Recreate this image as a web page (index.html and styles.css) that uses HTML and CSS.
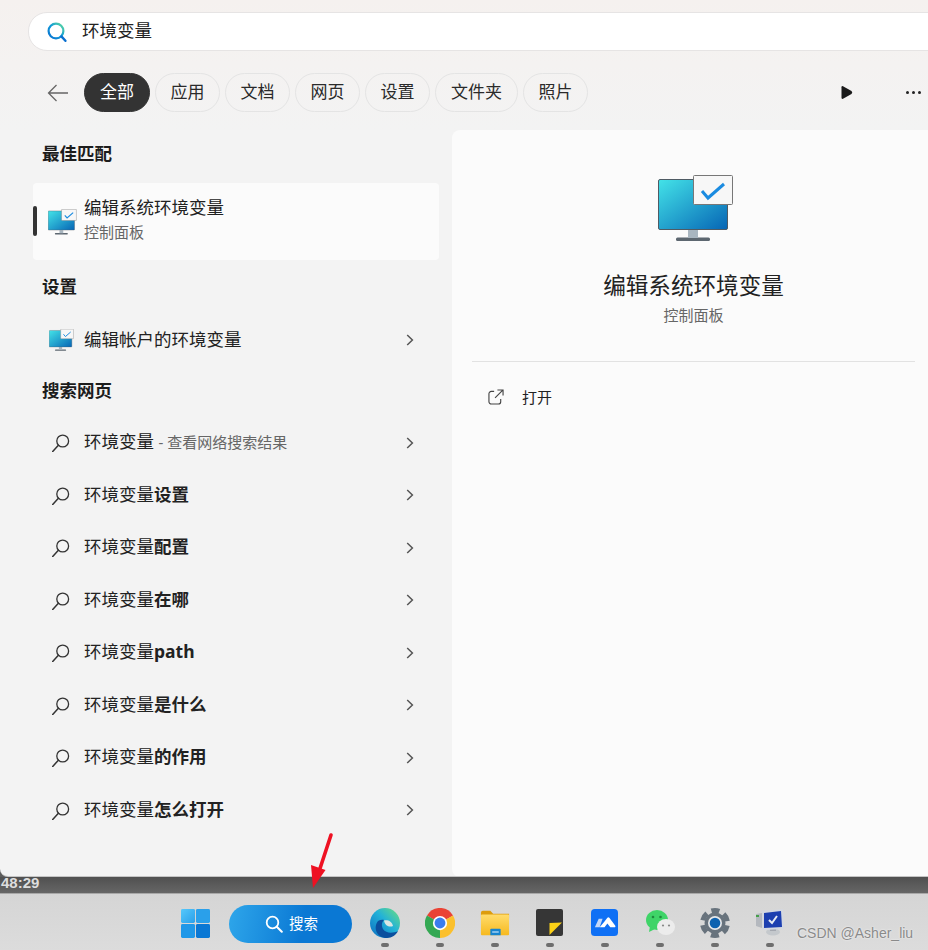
FILE: index.html
```html
<!DOCTYPE html>
<html lang="zh-CN">
<head>
  <meta charset="UTF-8">
  <title>搜索</title>
  <link rel="stylesheet" href="styles.css">
</head>
<body>

<svg class="defs" width="0" height="0">
  <defs>
    <linearGradient id="screenGrad" x1="0" y1="0" x2="1" y2="1">
      <stop offset="0" stop-color="#43e3e8"/>
      <stop offset="1" stop-color="#0665b5"/>
    </linearGradient>
    <linearGradient id="glassGrad" x1="1" y1="0" x2="0" y2="1">
      <stop offset="0" stop-color="#5fdc9c"/>
      <stop offset="0.5" stop-color="#0f9ad8"/>
      <stop offset="1" stop-color="#0a6fd0"/>
    </linearGradient>
    <linearGradient id="startGrad" x1="0" y1="0" x2="1" y2="1">
      <stop offset="0" stop-color="#56c8fb"/>
      <stop offset="1" stop-color="#2aa0ea"/>
    </linearGradient>
    <linearGradient id="edgeGrad" x1="1" y1="0" x2="0" y2="1">
      <stop offset="0" stop-color="#6fe07c"/>
      <stop offset="0.45" stop-color="#22b2d8"/>
      <stop offset="1" stop-color="#0c6cc0"/>
    </linearGradient>
    <linearGradient id="folderGrad" x1="0" y1="0" x2="0" y2="1">
      <stop offset="0" stop-color="#ffdc6c"/>
      <stop offset="1" stop-color="#f6b91f"/>
    </linearGradient>
    <symbol id="monitor" viewBox="0 0 76 67">
      <rect x="18" y="62.5" width="34" height="3.5" rx="1.5" fill="#5d6770"/>
      <rect x="30" y="55" width="10" height="8" fill="#a9b6c0"/>
      <rect x="0.5" y="4.5" width="69" height="50" rx="1.5" fill="url(#screenGrad)" stroke="#4f5b64"/>
      <rect x="35.5" y="0.5" width="39" height="29" rx="1" fill="#f7f7f7" stroke="#777"/>
      <path d="M44 16l6 7 16-14" fill="none" stroke="#1a8be0" stroke-width="3"/>
    </symbol>
    <symbol id="glass" viewBox="0 0 18 18">
      <circle cx="10.7" cy="7" r="5.9" fill="none" stroke="#333" stroke-width="1.3"/>
      <path d="M6.4 11.2L.7 17.4" fill="none" stroke="#333" stroke-width="1.5" stroke-linecap="round"/>
    </symbol>
    <symbol id="chevron" viewBox="0 0 8 12">
      <path d="M1.2 1l5.2 5-5.2 5" fill="none" stroke="#555" stroke-width="1.5"/>
    </symbol>
  </defs>
</svg>

<div class="flyout">
  <div class="search-box">
    <svg class="search-icon" viewBox="0 0 20 20">
      <circle cx="9" cy="9" r="7.4" fill="none" stroke="url(#glassGrad)" stroke-width="2.2"/>
      <path d="M14.4 14.4l4 4.4" stroke="#0a6fd0" stroke-width="2.4" stroke-linecap="round"/>
    </svg>
    <span class="search-text">环境变量</span>
  </div>

  <div class="filters">
    <svg class="back" viewBox="0 0 22 18">
      <path d="M21 9H1.5M9.5 1L1.5 9l8 8" fill="none" stroke="#666" stroke-width="1.3"/>
    </svg>
    <span class="chip active">全部</span>
    <span class="chip">应用</span>
    <span class="chip">文档</span>
    <span class="chip">网页</span>
    <span class="chip">设置</span>
    <span class="chip wide">文件夹</span>
    <span class="chip">照片</span>
    <svg class="play" viewBox="0 0 12 15">
      <path d="M2 1.2L10.5 6q1.500 1.500 0 3L2 13.800Q.5 14.300.5 12.800V2.200Q.5.700 2 1.200z" fill="#1a1a1a"/>
    </svg>
    <div class="dots"><i></i><i></i><i></i></div>
  </div>

  <div class="content">
    <div class="results">
      <h3 class="heading first">最佳匹配</h3>
      <div class="best">
        <span class="marker"></span>
        <svg class="app-icon"><use href="#monitor"/></svg>
        <div class="best-text">
          <div class="best-title">编辑系统环境变量</div>
          <div class="best-sub">控制面板</div>
        </div>
      </div>

      <h3 class="heading second">设置</h3>
      <div class="row">
        <svg class="app-icon small"><use href="#monitor"/></svg>
        <span class="label">编辑帐户的环境变量</span>
        <svg class="chev"><use href="#chevron"/></svg>
      </div>

      <h3 class="heading third">搜索网页</h3>
      <div class="row">
        <svg class="glass"><use href="#glass"/></svg>
        <span class="label">环境变量 <small>- 查看网络搜索结果</small></span>
        <svg class="chev"><use href="#chevron"/></svg>
      </div>
      <div class="row">
        <svg class="glass"><use href="#glass"/></svg>
        <span class="label">环境变量<b>设置</b></span>
        <svg class="chev"><use href="#chevron"/></svg>
      </div>
      <div class="row">
        <svg class="glass"><use href="#glass"/></svg>
        <span class="label">环境变量<b>配置</b></span>
        <svg class="chev"><use href="#chevron"/></svg>
      </div>
      <div class="row">
        <svg class="glass"><use href="#glass"/></svg>
        <span class="label">环境变量<b>在哪</b></span>
        <svg class="chev"><use href="#chevron"/></svg>
      </div>
      <div class="row">
        <svg class="glass"><use href="#glass"/></svg>
        <span class="label">环境变量<b>path</b></span>
        <svg class="chev"><use href="#chevron"/></svg>
      </div>
      <div class="row">
        <svg class="glass"><use href="#glass"/></svg>
        <span class="label">环境变量<b>是什么</b></span>
        <svg class="chev"><use href="#chevron"/></svg>
      </div>
      <div class="row">
        <svg class="glass"><use href="#glass"/></svg>
        <span class="label">环境变量<b>的作用</b></span>
        <svg class="chev"><use href="#chevron"/></svg>
      </div>
      <div class="row">
        <svg class="glass"><use href="#glass"/></svg>
        <span class="label">环境变量<b>怎么打开</b></span>
        <svg class="chev"><use href="#chevron"/></svg>
      </div>
    </div>

    <div class="detail">
      <svg class="detail-icon"><use href="#monitor"/></svg>
      <div class="detail-title">编辑系统环境变量</div>
      <div class="detail-sub">控制面板</div>
      <div class="divider"></div>
      <div class="action">
        <svg class="open-icon" viewBox="0 0 17 17">
          <path d="M6.5 2.500H3.5A2.500 2.500 0 0 0 1 5v8.500A2.500 2.500 0 0 0 3.500 16H11a2.500 2.500 0 0 0 2.500-2.500v-3" fill="none" stroke="#444" stroke-width="1.2"/>
          <path d="M10 1h6v6M16 1L7.500 9.500" fill="none" stroke="#444" stroke-width="1.2"/>
        </svg>
        <span>打开</span>
      </div>
    </div>
  </div>
</div>

<div class="band"><span>48:29</span></div>

<div class="taskbar">
  <svg class="start" viewBox="0 0 30 30">
    <rect x="0" y="0" width="14.5" height="14.5" rx="1.5" fill="url(#startGrad)"/>
    <rect x="15.5" y="0" width="14.5" height="14.5" rx="1.5" fill="#2aa0ea"/>
    <rect x="0" y="15.5" width="14.5" height="14.5" rx="1.5" fill="#1f98e8"/>
    <rect x="15.5" y="15.5" width="14.5" height="14.5" rx="1.5" fill="#0a78d4"/>
  </svg>

  <div class="search-pill">
    <svg viewBox="0 0 18 18">
      <circle cx="7.5" cy="7.5" r="5.8" fill="none" stroke="#fff" stroke-width="1.8"/>
      <path d="M11.8 11.800l5 5" stroke="#fff" stroke-width="2" stroke-linecap="round"/>
    </svg>
    <span>搜索</span>
  </div>

  <div class="dock">
    <div class="dock-item">
      <svg viewBox="0 0 30 30">
        <circle cx="15" cy="15" r="15" fill="url(#edgeGrad)"/>
        <path d="M14 12.500C18 11.500 22 13.500 23 18c-3 1.500-8 .5-9-5.500z" fill="#d9e6e4"/>
        <path d="M8 13C3 19 6 30 17 30c5 0 9-3 11-7-4 2-12 3-15-2-2-4-1-7 1-9-2-.5-4 0-6 1z" fill="#0b4f9e"/>
      </svg>
      <i></i>
    </div>
    <div class="dock-item">
      <svg viewBox="0 0 32 32">
        <path d="M16 16L2.100 8A16 16 0 0 1 29.900 8z" fill="#ea4335"/>
        <path d="M16 16L29.900 8A16 16 0 0 1 16 32z" fill="#fbc02d"/>
        <path d="M16 16L16 32A16 16 0 0 1 2.100 8z" fill="#34a853"/>
        <circle cx="16" cy="16" r="7.6" fill="#fff"/>
        <circle cx="16" cy="16" r="5.8" fill="#3b7dee"/>
      </svg>
      <i></i>
    </div>
    <div class="dock-item">
      <svg viewBox="0 0 32 28">
        <path d="M1 3q0-2 2-2h8l3 3h17v5H1z" fill="#dd9c0c"/>
        <rect x="1" y="5" width="30" height="22" rx="1" fill="url(#folderGrad)"/>
        <path d="M11 27v-6q0-1 1-1h9q1 0 1 1v6z" fill="#1784cf"/>
        <rect x="13" y="23" width="7" height="1.2" fill="#cfeaff"/>
      </svg>
      <i></i>
    </div>
    <div class="dock-item">
      <svg class="tile" viewBox="0 0 27 27">
        <rect x="0" y="0" width="27" height="27" rx="2" fill="#363636"/>
        <path d="M13.500 14L26 13.500 13.500 26z" fill="#fcd116"/>
      </svg>
      <i></i>
    </div>
    <div class="dock-item">
      <svg class="tile" viewBox="0 0 28 28">
        <rect x="0" y="0" width="28" height="28" rx="4" fill="#0f70f5"/>
        <path d="M4 19l4-9h4l-3 9z" fill="#c4d8f8"/>
        <path d="M9 19l5-6 3-4q1-1 2 0l6 8q1 2-1 2h-4l-3-4-3 4z" fill="#fff"/>
      </svg>
      <i></i>
    </div>
    <div class="dock-item">
      <svg viewBox="0 0 30 28">
        <ellipse cx="12" cy="11" rx="11" ry="10" fill="#3fd468"/>
        <path d="M5 17l-1 6 6-3z" fill="#3fd468"/>
        <circle cx="8" cy="8" r="1.3" fill="#1f8a3e"/>
        <circle cx="15.5" cy="8" r="1.3" fill="#1f8a3e"/>
        <ellipse cx="21" cy="18" rx="9" ry="8" fill="#ececec"/>
        <circle cx="18" cy="16.5" r="1.1" fill="#888"/>
        <circle cx="24" cy="16.5" r="1.1" fill="#888"/>
      </svg>
      <i></i>
    </div>
    <div class="dock-item">
      <svg viewBox="0 0 30 30">
        <circle cx="15" cy="15" r="12.5" fill="none" stroke="#68737d" stroke-width="5" stroke-dasharray="8 5.09" stroke-dashoffset="-2.55"/>
        <circle cx="15" cy="15" r="10.5" fill="#68737d"/>
        <circle cx="15" cy="15" r="7" fill="#e6e8ea"/>
        <circle cx="15" cy="15" r="5.3" fill="#0d62b0"/>
      </svg>
      <i></i>
    </div>
    <div class="dock-item">
      <svg viewBox="0 0 30 30">
        <ellipse cx="18" cy="24" rx="7" ry="3.5" fill="#c4c8cc"/>
        <rect x="15" y="20" width="6" height="3" fill="#a4a8b0"/>
        <path d="M1 6l6-1v15l-6-2z" fill="#b4b8be"/>
        <rect x="1" y="7" width="3" height="2" fill="#46a04a"/>
        <path d="M7 3l21-2 1 20-22 1z" fill="#d4d8e0"/>
        <path d="M9 5l17-2 1 16-18 1z" fill="#1c3fb0"/>
        <path d="M14 12l3 3 5-7" fill="none" stroke="#e8ecf4" stroke-width="2"/>
      </svg>
      <i></i>
    </div>
  </div>
</div>

<!-- screenshot annotation and watermark, both lie over the page -->
<svg class="arrow" viewBox="0 0 24 58">
  <path d="M21 3L9.5 38" stroke="#ee1122" stroke-width="3.6" stroke-linecap="round"/>
  <path d="M1 33l14.5 5L3 56z" fill="#ee1122"/>
</svg>
<span class="watermark">CSDN @Asher_liu</span>

</body>
</html>
```

FILE: styles.css
```css
* {
  box-sizing: border-box;
}

html, body {
  margin: 0;
  height: 950px;
  overflow: hidden;
}

body {
  position: relative;
  font-family: "Noto Sans", "Noto Sans CJK SC", sans-serif;
  color: #222;
  background-color: #5c5c5c;
}

.defs {
  position: absolute;
}

.flyout {
  height: 877px;
  overflow: hidden;
  background: linear-gradient(#f5f1ef, #f3f3f3 130px);
  border-bottom: 1px solid #c4c4c4;
  border-bottom-left-radius: 8px;
}

.search-box {
  display: flex;
  align-items: center;
  width: 940px;
  height: 39px;
  margin: 12px 0 0 28px;
  padding-left: 18px;
  background-color: #fff;
  border: 1px solid #e6e4e4;
  border-radius: 19px;
  font-size: 17.5px;
}

.search-icon {
  width: 20px;
  height: 20px;
  margin-right: 15px;
}

.search-text {
  padding-bottom: 4px;
}

.filters {
  display: flex;
  align-items: center;
  gap: 5px;
  height: 39px;
  margin-top: 22px;
  padding-left: 47px;
}

.back {
  width: 22px;
  height: 18px;
  margin-right: 10px;
}

.chip {
  display: flex;
  align-items: center;
  justify-content: center;
  height: 39px;
  padding: 0 14.5px 4px;
  border: 1px solid #e4e4e4;
  border-radius: 20px;
  font-size: 17px;
  color: #2a2a2a;
}

.chip.active {
  padding: 0 15px 4px;
  background-color: #333;
  border-color: #333;
  color: #fff;
}

.chip.wide {
  padding: 0 15px 4px;
}

.play {
  width: 12px;
  height: 15px;
  margin-left: auto;
}

.dots {
  display: flex;
  gap: 3px;
  margin: 0 7px 0 48px;
}

.dots i {
  width: 3px;
  height: 3px;
  border-radius: 50%;
  background-color: #222;
}

.content {
  display: grid;
  grid-template-columns: 452px 1fr;
  margin-top: 18px;
}

.results {
  padding-left: 33px;
}

.heading {
  display: flex;
  align-items: center;
  margin: 0;
  padding: 0 0 4px 9px;
  font-size: 17.5px;
  font-weight: 700;
  color: #1c1c1c;
}

.heading.first {
  height: 48px;
  margin-bottom: 5px;
}

.heading.second {
  height: 54px;
}

.heading.third {
  height: 50px;
}

.best {
  position: relative;
  display: flex;
  align-items: center;
  width: 406px;
  height: 77px;
  padding-left: 15px;
  background-color: #fbfbfb;
  border-radius: 4px;
}

.marker {
  position: absolute;
  left: 0;
  top: 23px;
  width: 4px;
  height: 30px;
  border-radius: 2px;
  background-color: #333;
}

.app-icon {
  flex: none;
  width: 29px;
  height: 26px;
  margin-right: 7px;
}

.app-icon.small {
  width: 25px;
  height: 22px;
  margin: 0 10px 0 1px;
}

.best-text {
  margin-bottom: 5px;
}

.best-title {
  font-size: 17.5px;
  line-height: 26px;
}

.best-sub {
  font-size: 15px;
  line-height: 24px;
  color: #666;
}

.row {
  display: flex;
  align-items: center;
  width: 406px;
  height: 52.5px;
  padding: 0 25px 0 15px;
}

.glass {
  flex: none;
  width: 18px;
  height: 18px;
  margin: 1px 14px 0 4px;
}

.label {
  flex: 1;
  margin-bottom: 4px;
  font-size: 17.5px;
}

.label b {
  font-weight: 700;
}

.label small {
  font-size: 15px;
  color: #666;
}

.chev {
  flex: none;
  width: 8px;
  height: 12px;
}

.detail {
  display: flex;
  flex-direction: column;
  align-items: center;
  height: 747px;
  padding: 45px 0 0 7px;
  background-color: #fbfbfb;
  border-radius: 8px 0 0 8px;
}

.detail-icon {
  width: 76px;
  height: 67px;
  margin-left: 5px;
}

.detail-title {
  margin-top: 29px;
  font-size: 22.6px;
  line-height: 30px;
}

.detail-sub {
  margin-top: 4px;
  font-size: 15px;
  line-height: 20px;
  color: #666;
}

.divider {
  align-self: stretch;
  height: 1px;
  margin: 36px 13px 0 13px;
  background-color: #e2e2e2;
}

.action {
  display: flex;
  align-items: center;
  align-self: stretch;
  gap: 18px;
  margin-top: 24px;
  padding-left: 29px;
  font-size: 15px;
  line-height: 22px;
}

.open-icon {
  width: 16px;
  height: 16px;
}

.band {
  height: 16px;
  padding-left: 1px;
  background: linear-gradient(#505050, #666);
  font-family: "Liberation Sans", sans-serif;
  font-size: 15px;
  font-weight: 700;
  line-height: 11px;
  color: #ddd;
}

.taskbar {
  display: flex;
  align-items: flex-start;
  height: 57px;
  padding: 11px 0 0 181px;
  background: linear-gradient(#d5d5d5, #dcdcdc);
  border-top: 1px solid #a8a8a8;
}

.start {
  width: 29px;
  height: 29px;
  margin: 4px 19px 0 0;
}

.search-pill {
  display: flex;
  align-items: center;
  justify-content: center;
  gap: 6px;
  width: 123px;
  height: 38px;
  padding: 0 0 0 2px;
  background: linear-gradient(100deg, #2ea6ea, #0a78d4 60%);
  border-radius: 19px;
  font-size: 14.5px;
  color: #fff;
}

.search-pill span {
  padding-bottom: 3px;
}

.search-pill svg {
  width: 18px;
  height: 18px;
}

.dock {
  display: flex;
  margin-left: 5px;
}

.dock-item {
  display: flex;
  flex-direction: column;
  align-items: center;
  justify-content: flex-end;
  width: 55px;
  height: 42px;
}

.dock-item svg {
  width: 30px;
  height: 30px;
  margin-bottom: 5px;
}

.dock-item svg.tile {
  width: 27px;
  height: 27px;
  margin-bottom: 7px;
}

.dock-item i {
  width: 8px;
  height: 4px;
  border-radius: 2px;
  background-color: #6e6e6e;
}

.arrow {
  position: absolute;
  left: 310px;
  top: 832px;
  width: 24px;
  height: 58px;
}

.watermark {
  position: absolute;
  left: 797px;
  top: 924px;
  font-family: "Liberation Sans", sans-serif;
  font-size: 14px;
  line-height: 18px;
  color: #8a8a8a;
  text-shadow: 0 0 2px #fff;
}
```
